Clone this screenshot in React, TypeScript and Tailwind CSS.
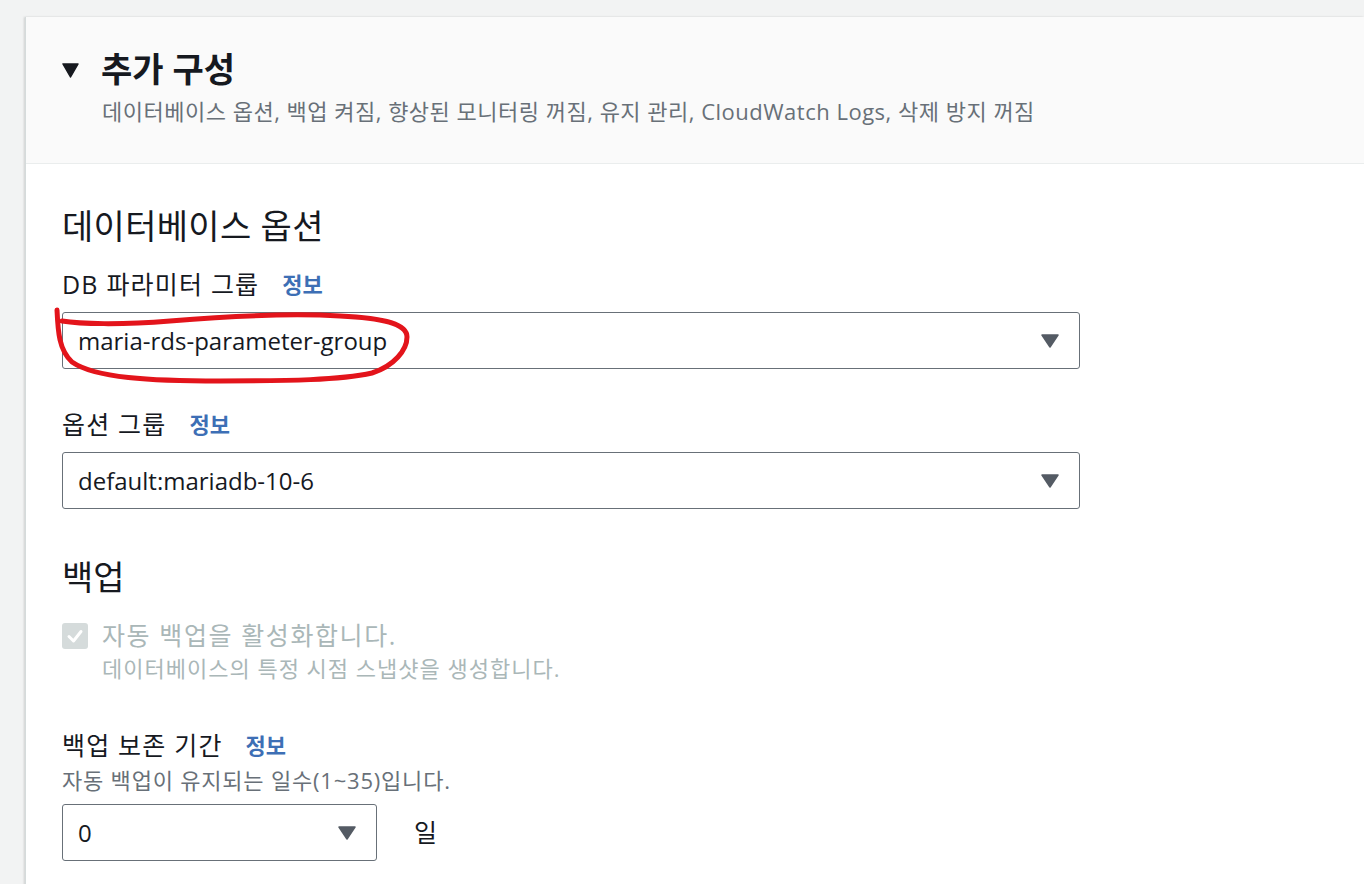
const font = { fontFamily: '"Open Sans", "Noto Sans CJK KR", sans-serif' };

function Caret() {
	return (
		<svg width="18" height="14" viewBox="0 0 18 14">
			<path d="M1 1 L17 1 L9 13 Z" fill="#545b64" stroke="#545b64" strokeWidth="1.5" strokeLinejoin="round" />
		</svg>
	);
}

function Select({ value, width }: { value: string; width: string }) {
	return (
		<div className={`${width} h-[57px] flex items-center justify-between pl-[15px] pr-[20px] border border-[#687078] rounded-[3px] bg-white`}>
			<span className="text-[24px] text-[#16191f]">{value}</span>
			<Caret />
		</div>
	);
}

function Label({ text }: { text: string }) {
	return (
		<div className="flex items-center text-[25px] leading-[30px] tracking-[1.2px] text-[#16191f]">
			<span>{text}</span>
			<span className="ml-[23px] text-[22px] tracking-normal font-bold text-[#3d6fb5]">정보</span>
		</div>
	);
}

export default function App() {
	return (
		<div className="relative w-[1364px] h-[884px] overflow-hidden bg-[#f2f3f3]" style={font}>
			<div className="ml-[25px] mt-[17px] h-[900px] bg-white border-l border-[#d5dbdb] shadow-[-1px_0_2px_rgba(0,0,0,0.15)]">
				{/* header */}
				<div className="bg-[#fafafa] border-b border-[#eaeded] pl-[36px] pt-[32px] pb-[38px]">
					<div className="flex items-center h-[40px]">
						<svg width="17" height="15" viewBox="0 0 17 15" className="mt-[2px]">
							<path d="M1 1 L16 1 L8.5 14 Z" fill="#16191f" stroke="#16191f" strokeWidth="1.5" strokeLinejoin="round" />
						</svg>
						<h2 className="ml-[22px] text-[34px] leading-[40px] font-bold text-[#16191f]">추가 구성</h2>
					</div>
					<p className="ml-[40px] mt-[8px] text-[22px] leading-[28px] tracking-[0.5px] text-[#687078]">
						데이터베이스 옵션, 백업 켜짐, 향상된 모니터링 꺼짐, 유지 관리, CloudWatch Logs, 삭제 방지 꺼짐
					</p>
				</div>

				{/* body */}
				<div className="pl-[36px] pt-[42px]">
					<h3 className="text-[34px] leading-[40px] tracking-[0.3px] text-[#16191f]">데이터베이스 옵션</h3>

					<div className="mt-[23px]">
						<Label text="DB 파라미터 그룹" />
					</div>
					<div className="mt-[13px]">
						<Select value="maria-rds-parameter-group" width="w-[1018px]" />
					</div>

					<div className="mt-[40px]">
						<Label text="옵션 그룹" />
					</div>
					<div className="mt-[13px]">
						<Select value="default:mariadb-10-6" width="w-[1018px]" />
					</div>

					<h3 className="mt-[48px] text-[34px] leading-[40px] text-[#16191f]">백업</h3>

					<div className="mt-[22px] flex items-start">
						<div className="mt-[4px] w-[26px] h-[26px] rounded-[3px] bg-[#d5dbdb] flex items-center justify-center">
							<svg width="18" height="18" viewBox="0 0 18 18">
								<path d="M3 9.5 L7.5 14 L15 4.5" fill="none" stroke="#fff" strokeWidth="3" strokeLinecap="round" strokeLinejoin="round" />
							</svg>
						</div>
						<div className="ml-[14px]">
							<div className="text-[25px] leading-[32px] tracking-[1.6px] text-[#aab7b8]">자동 백업을 활성화합니다.</div>
							<div className="mt-[2px] text-[22px] leading-[30px] tracking-[1px] text-[#aab7b8]">데이터베이스의 특정 시점 스냅샷을 생성합니다.</div>
						</div>
					</div>

					<div className="mt-[47px]">
						<Label text="백업 보존 기간" />
					</div>
					<p className="mt-[6px] text-[22px] leading-[28px] tracking-[0.8px] text-[#687078]">자동 백업이 유지되는 일수(1~35)입니다.</p>
					<div className="mt-[10px] flex items-center">
						<Select value="0" width="w-[315px]" />
						<span className="ml-[37px] text-[25px] text-[#16191f]">일</span>
					</div>
				</div>
			</div>

			{/* hand-drawn annotation */}
			<svg className="absolute left-0 top-0 pointer-events-none" width="1364" height="884" viewBox="0 0 1364 884">
				<path
					d="M57 310 C58 332 59 350 72 362 C95 378 150 381 220 381 C290 381 340 380 372 373 C394 366 407 350 407 337 C407 325 387 318 340 316 C290 313 230 316 170 321 C120 325 80 324 62 321"
					fill="none"
					stroke="#e3141b"
					strokeWidth="5"
					strokeLinecap="round"
					strokeLinejoin="round"
				/>
			</svg>
		</div>
	);
}
